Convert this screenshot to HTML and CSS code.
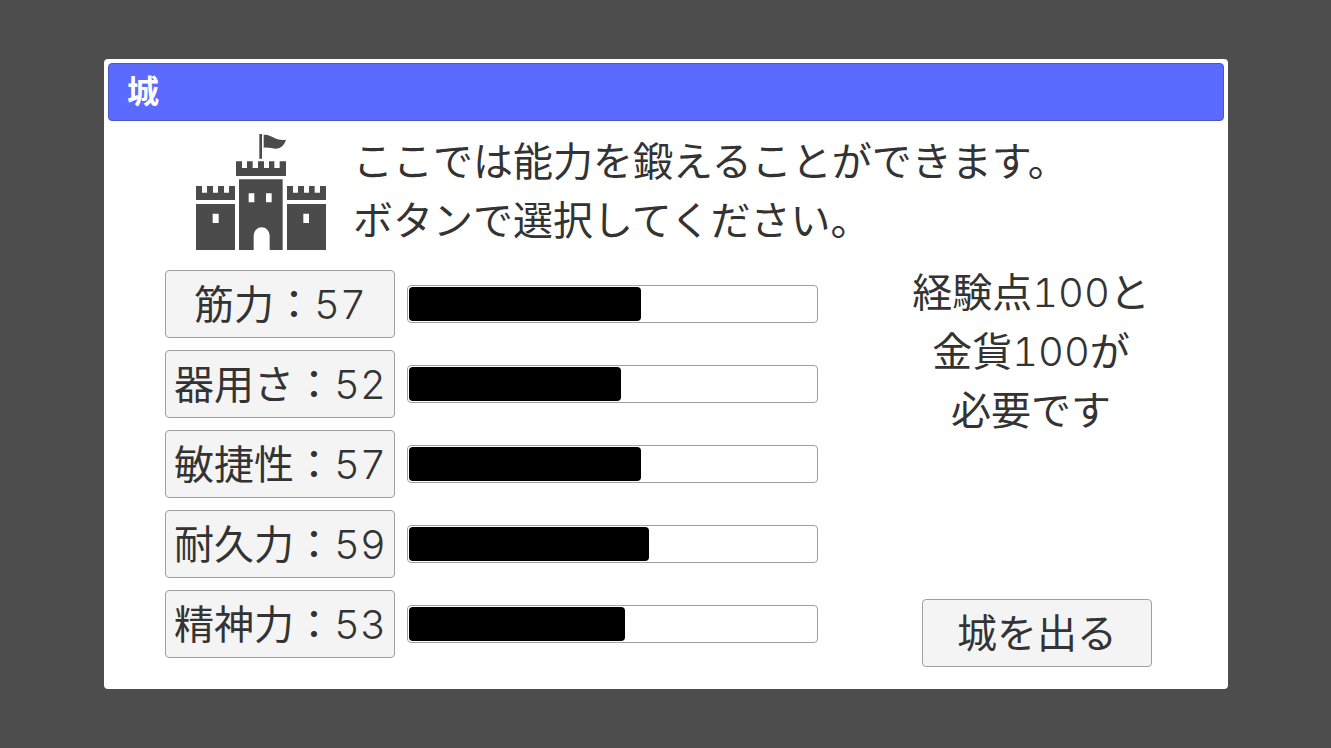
FILE: index.html
```html
<!DOCTYPE html>
<html lang="ja">
<head>
<meta charset="utf-8">
<meta name="viewport" content="width=device-width, initial-scale=1">
<title>城</title>
<link rel="stylesheet" href="styles.css">
</head>
<body>
<main class="dialog">
  <h1 class="dialog-title">城</h1>
  <section class="intro">
    <svg class="castle" viewBox="48 24 390 351" aria-hidden="true">
      <path d="M238 27h8v74h-8zM251 29c14-1 23 5 34 11 11 5 22 6 33 4-3 11-11 22-22 26-14 4-29-5-45-2z"/>
      <path d="M168 109h18v20h15v-20h17v20h16v-20h18v20h15v-20h16v20h16v-20h19v44H168z"/>
      <path d="M48 183h18v20h15v-20h18v20h15v-20h18v20h15v-20h18v42H48zM321 183h18v20h15v-20h18v20h15v-20h17v20h16v-20h18v42H321z"/>
      <path fill-rule="evenodd" d="M48 237h117v138H48zM98 266v28h18v-28zM321 237h117v138H321zM370 266v28h17v-28zM177 163h131v212h-39v-44a24 24 0 0 0-48 0v44h-44zM206 205v27h17v-27zM258 205v27h17v-27z"/>
    </svg>
    <p class="message">ここでは能力を鍛えることができます。<br>ボタンで選択してください。</p>
  </section>
  <div class="content">
    <section class="stats">
      <div class="stat"><button class="button" id="strength" type="button">筋力：<span class="number">57</span></button><progress class="bar" aria-labelledby="strength" value="57" max="100"></progress></div>
      <div class="stat"><button class="button" id="dexterity" type="button">器用さ：<span class="number">52</span></button><progress class="bar" aria-labelledby="dexterity" value="52" max="100"></progress></div>
      <div class="stat"><button class="button" id="agility" type="button">敏捷性：<span class="number">57</span></button><progress class="bar" aria-labelledby="agility" value="57" max="100"></progress></div>
      <div class="stat"><button class="button" id="endurance" type="button">耐久力：<span class="number">59</span></button><progress class="bar" aria-labelledby="endurance" value="59" max="100"></progress></div>
      <div class="stat"><button class="button" id="spirit" type="button">精神力：<span class="number">53</span></button><progress class="bar" aria-labelledby="spirit" value="53" max="100"></progress></div>
    </section>
    <aside class="side">
      <p class="cost">経験点<span class="number">100</span>と<br>金貨<span class="number">100</span>が<br>必要です</p>
      <button class="button" type="button">城を出る</button>
    </aside>
  </div>
</main>
</body>
</html>
```
FILE: styles.css
```css
* {
  box-sizing: border-box;
}

body {
  margin: 0;
  padding: 59px 103px 59px 104px;
  background: #4d4d4d;
  color: #333;
  font-family: "Inter", "Noto Sans CJK JP", sans-serif;
  font-size: 40px;
  font-weight: 400;
  line-height: 59px;
}

p,
h1 {
  margin: 0;
}

.number {
  font-weight: 300;
  font-variant-numeric: tabular-nums;
}

.dialog {
  padding: 4px 4px 22px;
  border-radius: 4px;
  background: #fff;
}

.dialog-title {
  height: 58px;
  padding: 0 18px;
  border: 1px solid #4c55c4;
  border-radius: 4px;
  background: #5c6bff;
  color: #fff;
  font-size: 32px;
  font-weight: 700;
  line-height: 56px;
}

.intro {
  display: flex;
  align-items: flex-end;
  gap: 27px;
  padding: 11px 20px 13px 88px;
}

.castle {
  flex: none;
  width: 130px;
  height: 117px;
  fill: #4b4b4b;
}

.content {
  display: flex;
  gap: 92px;
  padding: 0 72px 0 57px;
}

.stats {
  display: flex;
  flex: 1;
  flex-direction: column;
  gap: 12px;
  padding-top: 7px;
}

.stat {
  display: flex;
  align-items: center;
  gap: 12px;
}

.button {
  flex: none;
  width: 230px;
  height: 68px;
  padding: 0;
  border: 1px solid #a0a0a0;
  border-radius: 4px;
  background: #f4f4f4;
  color: inherit;
  font: inherit;
  white-space: nowrap;
}

.bar {
  appearance: none;
  flex: 1;
  min-width: 0;
  height: 38px;
  padding: 1px;
  border: 1px solid #a0a0a0;
  border-radius: 4px;
  background: #fff;
}

.bar::-webkit-progress-bar {
  background: #fff;
}

.bar::-webkit-progress-value {
  border-radius: 4px;
  background: #000;
}

.side {
  display: flex;
  flex: none;
  flex-direction: column;
  align-items: flex-end;
  justify-content: space-between;
  width: 242px;
  min-height: 404px;
}

.cost {
  width: 100%;
  text-align: center;
  white-space: nowrap;
}
```
